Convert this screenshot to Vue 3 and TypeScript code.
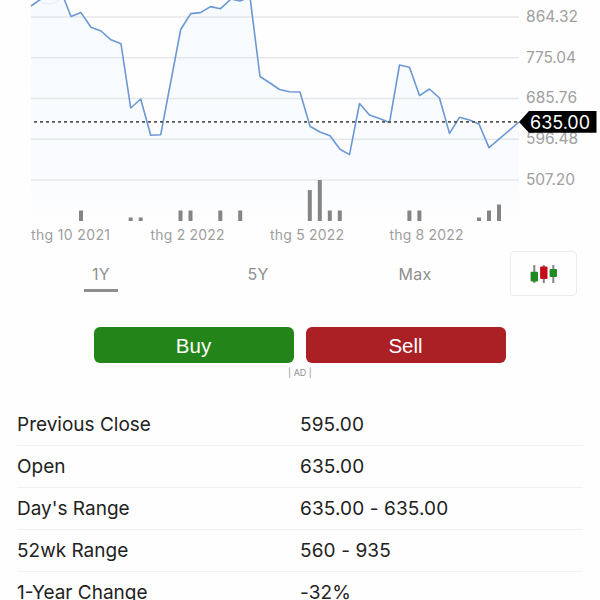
<script setup lang="ts">
interface Tick { y: number; label: string; width: number }
interface Label { x: number; text: string; width: number }

const ticks: Tick[] = [
  { y: 17, label: '864.32', width: 52 },
  { y: 57.8, label: '775.04', width: 50 },
  { y: 98.6, label: '685.76', width: 51 },
  { y: 139.2, label: '596.48', width: 52 },
  { y: 180, label: '507.20', width: 49 },
]

const months: Label[] = [
  { x: 31, text: 'thg 10 2021', width: 79 },
  { x: 150.5, text: 'thg 2 2022', width: 74 },
  { x: 270, text: 'thg 5 2022', width: 74 },
  { x: 389.5, text: 'thg 8 2022', width: 74 },
]

const prices: [number, number][] = [
  [31, 6], [41, -1], [51, -5], [61, -9], [71, 16.5], [81, 12.6], [91, 27.2], [101, 31], [111, 39.8], [121, 43.8],
  [130.7, 108], [140.7, 99], [150.7, 135.3], [160.7, 134.7], [180.7, 29.5], [190.7, 13.6],
  [200.5, 12.6], [210.5, 6.6], [220.5, 8.7], [231, -1], [240, 1], [250, -3], [260, 76.5], [270, 83], [279.5, 89.5],
  [289.5, 91.8], [300, 92], [310, 126.3], [320, 132], [330, 135.8], [340, 149.3], [349.5, 154.6],
  [359.5, 103.5], [369.5, 115], [379.5, 118.5], [389.5, 122.6], [399.5, 65], [409.5, 67.2], [419.5, 95.6],
  [429.5, 89], [439.5, 98], [449.5, 133.4], [459.5, 117.3], [469.5, 120], [479, 124], [489, 147.6], [519, 122],
]
const line = prices.map((p) => p.join(',')).join(' ')
const area = `31,221 ${line} 519,221`

const volumes: [number, number][] = [
  [81, 10.5], [130.7, 3.5], [140.7, 3.5], [180.5, 10.5], [190.5, 10.5], [220.3, 10.5], [240.2, 10.5], [309.8, 31],
  [319.8, 41], [329.8, 10.5], [339.8, 10.5], [409.4, 10.5], [419.4, 10.5], [479, 3.5], [489, 10.5], [499, 16.5],
]

const rows: [string, string][] = [
  ['Previous Close', '595.00'],
  ['Open', '635.00'],
  ["Day's Range", '635.00 - 635.00'],
  ['52wk Range', '560 - 935'],
  ['1-Year Change', '-32%'],
]
</script>

<template>
  <main class="page">
    <svg class="chart" width="600" height="250" viewBox="0 0 600 250">
      <defs>
        <linearGradient id="fade" gradientUnits="userSpaceOnUse" x1="0" y1="0" x2="0" y2="221">
          <stop offset="0" stop-color="#f8fbfe" />
          <stop offset="0.78" stop-color="#f9fbfe" />
          <stop offset="1" stop-color="#fefefe" />
        </linearGradient>
      </defs>
      <polygon :points="area" fill="url(#fade)" />
      <g v-for="t in ticks" :key="t.label">
        <line x1="31" x2="519" :y1="t.y" :y2="t.y" class="grid" />
        <text x="526" :y="t.y + 4.7" class="tick" :textLength="t.width">{{ t.label }}</text>
      </g>
      <circle cx="49" cy="-11" r="15" class="ring" />
      <polyline :points="line" class="line" />
      <line x1="34" x2="520" y1="121.8" y2="121.8" class="current" />
      <rect
        v-for="v in volumes" :key="v[0]" class="volume"
        :x="v[0] - 2" :y="221 - v[1]" width="4" :height="v[1]"
      />
      <path d="M519 122 L529 111 H596.5 V132.7 H529 Z" fill="#000" />
      <text x="530" y="128.5" class="price" textLength="60">635.00</text>
      <text v-for="m in months" :key="m.text" :x="m.x" y="240.3" class="month" :textLength="m.width">{{ m.text }}</text>
    </svg>

    <nav class="periods">
      <button class="period active">1Y</button>
      <button class="period">5Y</button>
      <button class="period">Max</button>
      <button class="candles" aria-label="Candles">
        <svg width="28" height="20" viewBox="0 0 28 20">
          <g fill="#858585">
            <rect x="3.3" y="1" width="2" height="18" />
            <rect x="12.8" y="1" width="2" height="18" />
            <rect x="22.3" y="1" width="2" height="18" />
          </g>
          <rect x="0.6" y="7.7" width="7.4" height="9.8" rx="1" fill="#218a20" />
          <rect x="10.1" y="2.5" width="7.4" height="12.5" rx="1" fill="#c40d18" />
          <rect x="19.6" y="5" width="7.4" height="8" rx="1" fill="#218a20" />
        </svg>
      </button>
    </nav>

    <div class="trade">
      <button class="buy">Buy</button>
      <button class="sell">Sell</button>
    </div>
    <div class="ad">| AD |</div>

    <dl class="stats">
      <div v-for="r in rows" :key="r[0]" class="row">
        <dt>{{ r[0] }}</dt>
        <dd>{{ r[1] }}</dd>
      </div>
    </dl>
  </main>
</template>

<style>
body {
  overflow: hidden;
  background: #fefefe;
}
</style>

<style scoped>
.page {
  width: 600px;
  height: 600px;
  overflow: hidden;
  background: #fefefe;
  font-family: Inter, sans-serif;
}
button {
  border: 0;
  padding: 0;
  margin: 0;
  background: none;
  font-family: inherit;
}
.chart {
  display: block;
}
.grid {
  stroke: #e4e7ea;
  stroke-width: 1.5;
}
.tick {
  font-size: 15.5px;
  fill: #a0a0a0;
}
.ring {
  fill: none;
  stroke: #e8ebef;
}
.line {
  fill: none;
  stroke: #6b98d3;
  stroke-width: 1.6;
  stroke-linejoin: round;
}
.current {
  stroke: #555;
  stroke-width: 1.7;
  stroke-dasharray: 3 3;
}
.volume {
  fill: #858585;
}
.price {
  font-size: 18px;
  fill: #fff;
}
.month {
  font-size: 14px;
  fill: #9e9e9e;
}
.periods {
  display: grid;
  grid-template-columns: 34px 34px 34px 67px;
  column-gap: 123px;
  padding-left: 84px;
  height: 48px;
  align-items: start;
}
.period {
  height: 42px;
  font-size: 16px;
  color: #8f8f8f;
  letter-spacing: 0.3px;
  padding-top: 9px;
  border-bottom: 3px solid transparent;
}
.active {
  border-bottom-color: #8f8f8f;
}
.candles {
  display: flex;
  align-items: center;
  justify-content: center;
  width: 67px;
  height: 45px;
  margin-top: 1px;
  margin-left: -45px;
  border: 1px solid #ededed;
  border-radius: 4px;
}
.trade {
  display: flex;
  gap: 12px;
  padding: 29px 0 0 94px;
}
.buy,
.sell {
  width: 200px;
  height: 36px;
  padding: 1px 1px 0 0;
  border-radius: 6px;
  color: #fff;
  font: 20.5px 'Liberation Sans', sans-serif;
}
.buy {
  background: #238519;
}
.sell {
  background: #aa2025;
}
.ad {
  height: 41px;
  text-align: center;
  font-size: 9px;
  line-height: 20px;
  color: #909090;
}
.stats {
  margin: 0;
  padding: 0 17px;
}
.row {
  display: grid;
  grid-template-columns: 283px 1fr;
  box-sizing: border-box;
  height: 42px;
  line-height: 42px;
  border-bottom: 1px solid #f1f1f1;
  font-size: 19px;
  color: #222;
}
dt,
dd {
  margin: 0;
}
dd {
  letter-spacing: 0.12px;
}
</style>
